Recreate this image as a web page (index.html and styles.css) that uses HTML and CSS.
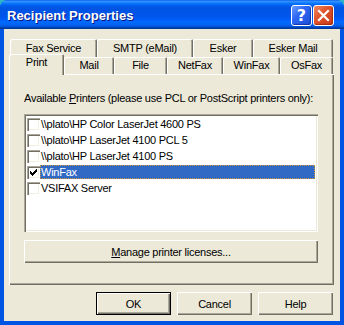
FILE: index.html
```html
<!DOCTYPE html>
<html lang="en">
<head>
    <meta charset="UTF-8">
    <title>Recipient Properties</title>
    <link rel="stylesheet" href="styles.css">
</head>
<body>
    <div class="window">
        <div class="titlebar">
            <span class="title">Recipient Properties</span>
            <div class="caption-buttons">
                <div class="caption-btn caption-help">?</div>
                <div class="caption-btn caption-close">
                    <svg viewBox="0 0 21 21" width="21" height="21">
                        <path d="M6 6L15 15M15 6L6 15" stroke="#fff" stroke-width="2.2" stroke-linecap="square"/>
                    </svg>
                </div>
            </div>
        </div>

        <div class="client">
            <div class="tabs">
                <div class="tab-row tab-row-back">
                    <div class="tab w-87">Fax Service</div>
                    <div class="tab w-96">SMTP (eMail)</div>
                    <div class="tab w-60">Esker</div>
                    <div class="tab w-80">Esker Mail</div>
                </div>
                <div class="tab-row tab-row-front">
                    <div class="tab tab-active w-55">Print</div>
                    <div class="tab w-50">Mail</div>
                    <div class="tab w-53">File</div>
                    <div class="tab w-56">NetFax</div>
                    <div class="tab w-57">WinFax</div>
                    <div class="tab w-53">OsFax</div>
                </div>
            </div>

            <div class="panel">
                <p class="label">Available <u>P</u>rinters (please use PCL or PostScript printers only):</p>

                <div class="listbox">
                    <div class="item">
                        <span class="checkbox"></span>
                        <span class="item-text">\\plato\HP Color LaserJet 4600 PS</span>
                    </div>
                    <div class="item">
                        <span class="checkbox"></span>
                        <span class="item-text">\\plato\HP LaserJet 4100 PCL 5</span>
                    </div>
                    <div class="item">
                        <span class="checkbox"></span>
                        <span class="item-text">\\plato\HP LaserJet 4100 PS</span>
                    </div>
                    <div class="item">
                        <span class="checkbox">
                            <!-- classic 7x7 check mark -->
                            <svg viewBox="0 0 7 7" width="7" height="7" shape-rendering="crispEdges">
                                <path d="M0 2h1v3h-1zM1 3h1v3h-1zM2 4h1v3h-1zM3 3h1v3h-1zM4 2h1v3h-1zM5 1h1v3h-1zM6 0h1v3h-1z" fill="#000"/>
                            </svg>
                        </span>
                        <span class="item-text item-selected">WinFax</span>
                    </div>
                    <div class="item">
                        <span class="checkbox"></span>
                        <span class="item-text">VSIFAX Server</span>
                    </div>
                </div>

                <button class="button button-wide"><u>M</u>anage printer licenses...</button>
            </div>

            <div class="footer">
                <button class="button button-default">OK</button>
                <button class="button">Cancel</button>
                <button class="button">Help</button>
            </div>
        </div>
    </div>
</body>
</html>
```

FILE: styles.css
```css
:root {
    --face: #ece9d8;
    --light: #f1efe2;
    --shadow: #aca899;
    --dark: #716f64;
    --highlight: #316ac5;
    --frame: #0054e3;
}

body {
    margin: 0;
    padding: 0;
    background-color: #2fb5c8;
    font-family: "Liberation Sans", Arial, sans-serif;
    font-size: 11px;
    letter-spacing: -0.25px;
    color: #000;
}

.window {
    width: 344px;
    height: 325px;
    display: flex;
    flex-direction: column;
    background-color: var(--frame);
    border-radius: 8px 8px 0 0;
    overflow: hidden;
}

/* Title bar */
.titlebar {
    height: 29px;
    flex-shrink: 0;
    display: flex;
    align-items: flex-start;
    justify-content: space-between;
    background: linear-gradient(to bottom,
        #0058ee 0%, #3a93ff 4%, #288eff 7%, #127dff 10%, #036ffc 14%,
        #0262ee 18%, #0057e5 24%, #0054e3 30%, #0055eb 56%, #005bf5 66%,
        #026afe 76%, #0062ef 86%, #0052d6 92%, #0040ab 96%, #003092 100%);
}

.title {
    margin: 8px 0 0 7px;
    color: #fff;
    font-weight: bold;
    font-size: 13px;
    letter-spacing: 0;
    line-height: 15px;
    text-shadow: 1px 1px #0a1883;
}

.caption-buttons {
    display: flex;
    margin: 5px 10px 0 0;
}

.caption-btn {
    width: 19px;
    height: 19px;
    border: 1px solid #fff;
    border-radius: 3px;
    display: flex;
    align-items: center;
    justify-content: center;
    color: #fff;
    overflow: hidden;
}

.caption-help {
    background: linear-gradient(135deg, #6b9dff 0%, #2d67f2 40%, #1c4fd8 100%);
    box-shadow: inset -1px -1px 1px rgba(0, 20, 120, 0.5);
    font-family: "DejaVu Sans", sans-serif;
    font-weight: bold;
    font-size: 16px;
    letter-spacing: 0;
}

.caption-close {
    margin-left: 1px;
    background: linear-gradient(135deg, #f08a62 0%, #e0552e 40%, #c83c14 100%);
    box-shadow: inset -1px -1px 1px rgba(120, 20, 0, 0.5);
}

.caption-close svg {
    margin: -1px;
}

/* Client area */
.client {
    flex: 1;
    margin: 0 4px 4px 4px;
    padding: 10px 6px 6px 5px;
    background-color: var(--face);
    display: flex;
    flex-direction: column;
}

.tabs {
    display: flex;
    flex-direction: column;
}

.tab-row {
    display: flex;
}

.tab-row-back {
    height: 18px;
    margin-left: 1px;
}

.tab-row-front {
    height: 17px;
}

.tab {
    box-sizing: border-box;
    height: 100%;
    text-align: center;
    line-height: 17px;
    background-color: var(--face);
    border-radius: 2px 2px 0 0;
    box-shadow: inset 1px 1px #fff, inset -1px 0 var(--dark), inset -2px 0 var(--shadow);
}

.tab-row-back .tab {
    line-height: 18px;
}

.tab-active {
    position: relative;
    z-index: 1;
    height: 21px;
    margin-top: -3px;
    line-height: 17px;
}

.w-50 { width: 50px; }
.w-53 { width: 53px; }
.w-55 { width: 55px; }
.w-56 { width: 56px; }
.w-57 { width: 57px; }
.w-60 { width: 60px; }
.w-80 { width: 80px; }
.w-87 { width: 87px; }
.w-96 { width: 96px; }

/* Tab panel */
.panel {
    width: 325px;
    height: 211px;
    box-sizing: border-box;
    padding: 18px 16px 0 15px;
    box-shadow: inset 1px 1px #fff, inset -1px -1px var(--dark), inset -2px -2px var(--shadow);
    display: flex;
    flex-direction: column;
}

.label {
    margin: 0;
    line-height: 13px;
}

.listbox {
    margin-top: 9px;
    height: 118px;
    box-sizing: border-box;
    padding: 2px;
    background-color: #fff;
    box-shadow: inset 1px 1px var(--shadow), inset 2px 2px var(--dark), inset -1px -1px #fff, inset -2px -2px var(--face);
}

.item {
    display: flex;
    align-items: center;
    height: 16px;
}

.checkbox {
    box-sizing: border-box;
    width: 13px;
    height: 13px;
    margin-left: 1px;
    padding: 3px;
    background-color: #fff;
    box-shadow: inset 1px 1px var(--shadow), inset 2px 2px var(--dark), inset -1px -1px #fff, inset -2px -2px var(--light);
    display: flex;
}

.checkbox svg {
    display: block;
}

.item-text {
    flex: 1;
    height: 14px;
    line-height: 14px;
    padding-left: 1px;
    margin-right: 1px;
    box-sizing: border-box;
}

.item-selected {
    background-color: var(--highlight);
    color: #fff;
    border: 1px dotted #ce953a;
    line-height: 12px;
    padding-left: 0;
}

/* Buttons */
.button {
    box-sizing: border-box;
    height: 23px;
    width: 75px;
    padding: 0;
    border: none;
    font-family: inherit;
    font-size: 11px;
    letter-spacing: -0.25px;
    color: #000;
    background-color: var(--face);
    box-shadow: inset 1px 1px #fff, inset -1px -1px var(--dark), inset -2px -2px var(--shadow);
}

.button-wide {
    width: 294px;
    margin-top: 8px;
}

.button-default {
    border: 1px solid #000;
}

.footer {
    display: flex;
    justify-content: flex-end;
    gap: 6px;
    margin-top: 7px;
    padding-right: 1px;
}
```
